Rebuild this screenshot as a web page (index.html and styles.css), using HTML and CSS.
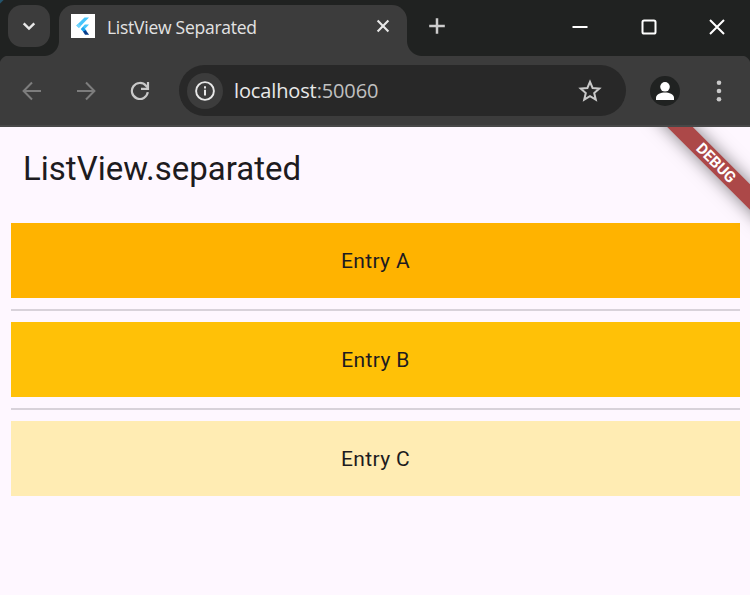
FILE: index.html
```html
<!DOCTYPE html>
<html lang="en">
<head>
<meta charset="utf-8">
<title>ListView Separated</title>
<link rel="stylesheet" href="styles.css">
</head>
<body>
<div class="window">
  <header class="tabstrip">
    <div class="tab-search"><svg width="42" height="42" viewBox="0 0 42 42"><path d="M15.700 18.300l5.300 5.300 5.300-5.300" fill="none" stroke="#e8e8e8" stroke-width="2.400"/></svg></div>
    <div class="tab">
      <svg class="favicon" width="24" height="24" viewBox="0 0 24 24"><rect width="24" height="24" fill="#fff"/><path d="M13.500 3.500H18L8 13.800l-2.600-2.300z" fill="#47c5fb"/><path d="M5.200 11.600L7.800 14l2-2-2.300-2.500z" fill="#71d4fc"/><path d="M13.800 10.500H18l-4.200 4.500H9.800z" fill="#47c5fb"/><path d="M9.800 15.300l2.300-2.300 3.400 3.600-2.500 1.800z" fill="#20a5ed"/><path d="M12 17.600l2.800-1.400 3.300 4.500H14z" fill="#083e8c"/></svg>
      <span class="tab-title">ListView Separated</span>
      <svg class="tab-close" width="14" height="14" viewBox="0 0 14 14"><path d="M1.600 1.600l10.800 10.800M12.400 1.600L1.600 12.400" stroke="#e8e8e8" stroke-width="2.100"/></svg>
    </div>
    <svg class="new-tab" width="16" height="16" viewBox="0 0 16 16"><path d="M8 .2v15.600M.2 8h15.600" stroke="#ccc" stroke-width="2.500"/></svg>
    <div class="controls">
      <svg width="16" height="16" viewBox="0 0 16 16"><path d="M.5 8h15" stroke="#fff" stroke-width="2"/></svg>
      <svg width="16" height="16" viewBox="0 0 16 16"><rect x="1.500" y="1.500" width="13" height="13" rx="1.600" fill="none" stroke="#fff" stroke-width="2"/></svg>
      <svg width="16" height="16" viewBox="0 0 16 16"><path d="M1 1l14 14M15 1L1 15" stroke="#fff" stroke-width="2"/></svg>
    </div>
  </header>
  <nav class="toolbar">
    <svg class="nav-icon" width="20" height="20" viewBox="0 0 20 20"><path d="M19 10H2M10 1.500L1.600 10l8.400 8.500" fill="none" stroke="#7d7d7d" stroke-width="2"/></svg>
    <svg class="nav-icon" width="20" height="20" viewBox="0 0 20 20"><path d="M1 10h17M10 1.500l8.400 8.500-8.400 8.500" fill="none" stroke="#7d7d7d" stroke-width="2"/></svg>
    <svg class="nav-icon reload" width="20" height="20" viewBox="0 0 20 20"><path d="M17.800 11.200A8 8 0 1 1 16 4.800L17.300 6.400" fill="none" stroke="#c9c9c9" stroke-width="2.200"/><path d="M18 1v6.800h-7" fill="none" stroke="#c9c9c9" stroke-width="2.200"/></svg>
    <div class="omnibox">
      <div class="site-info"><svg width="20" height="20" viewBox="0 0 20 20"><circle cx="10" cy="10" r="8.900" fill="none" stroke="#e8e8e8" stroke-width="1.900"/><path d="M10 8.800v5.700M10 5.300v2.100" stroke="#e8e8e8" stroke-width="2"/></svg></div>
      <span class="url">localhost<span class="port">:50060</span></span>
      <svg class="star" width="24" height="24" viewBox="0 0 24 24"><path d="M12 2.800l2.600 6.200 6.700.6-5.100 4.400 1.600 6.700-5.800-3.500-5.800 3.500L7.800 14 2.700 9.600l6.700-.6z" fill="none" stroke="#c9c9c9" stroke-width="2"/></svg>
    </div>
    <svg class="avatar" width="30" height="30" viewBox="0 0 30 30"><circle cx="15" cy="15" r="15" fill="#202221"/><circle cx="15" cy="10.800" r="4.800" fill="#fff"/><path d="M6 24v-2.200c0-3.600 5-5.300 9-5.300s9 1.700 9 5.300V24z" fill="#fff"/></svg>
    <svg class="menu" width="6" height="22" viewBox="0 0 6 22"><g fill="#c9c9c9"><circle cx="3" cy="2.700" r="2.300"/><circle cx="3" cy="11" r="2.300"/><circle cx="3" cy="19.300" r="2.300"/></g></svg>
  </nav>
  <main class="app">
    <h1 class="app-title">ListView.separated</h1>
    <ul class="list">
      <li class="entry entry-a">Entry A</li>
      <li class="divider"></li>
      <li class="entry entry-b">Entry B</li>
      <li class="divider"></li>
      <li class="entry entry-c">Entry C</li>
    </ul>
    <div class="banner">DEBUG</div>
  </main>
</div>
</body>
</html>
```

FILE: styles.css
```css
* { box-sizing: border-box; }
body { margin: 0; background: #fef7ff; }
svg { display: block; flex: none; }
.window { width: 750px; height: 595px; display: flex; flex-direction: column; overflow: hidden; }

.tabstrip {
  height: 56px;
  flex: none;
  display: flex;
  align-items: flex-start;
  background: linear-gradient(135deg, #24546c 2px, transparent 3px), #202221;
}
.tab-search { margin: 5px 9px 0 8px; width: 42px; height: 42px; border-radius: 14px; background: #3c3c3c; }
.tab {
  position: relative;
  width: 348px;
  height: 51px;
  margin-top: 5px;
  padding: 0 17px 8px 12px;
  display: flex;
  align-items: center;
  background: #3c3c3c;
  border-radius: 15px 15px 0 0;
}
.tab::before, .tab::after { content: ""; position: absolute; bottom: 0; width: 15px; height: 15px; }
.tab::before { left: -15px; background: radial-gradient(circle at 0 0, transparent 14.5px, #3c3c3c 15.5px); }
.tab::after { right: -15px; background: radial-gradient(circle at 100% 0, transparent 14.5px, #3c3c3c 15.5px); }
.favicon { margin-top: -1px; }
.tab-close { margin-top: -2px; }
.tab-title { flex: 1; margin-left: 12px; font: 17.5px/24px "Open Sans", sans-serif; letter-spacing: -0.26px; color: #e3e3e3; white-space: nowrap; }
.new-tab { margin: 18px 0 0 22px; }
.controls { margin: 19px 25px 0 auto; display: flex; gap: 52.5px; }

.toolbar {
  position: relative;
  height: 71px;
  flex: none;
  display: flex;
  align-items: center;
  padding: 0 28px 0 22px;
  background: #3c3c3c;
  border-bottom: 2px solid #484848;
}
.toolbar::before, .toolbar::after { content: ""; position: absolute; top: 0; width: 9px; height: 9px; }
.toolbar::before { left: 0; background: radial-gradient(circle at 100% 100%, transparent 9px, #202221 10px); }
.toolbar::after { right: 0; background: radial-gradient(circle at 0 100%, transparent 9px, #202221 10px); }
.nav-icon { margin-right: 34px; }
.nav-icon.reload { margin-right: 29px; }
.omnibox { width: 447px; height: 51px; border-radius: 26px; background: #282828; display: flex; align-items: center; padding: 0 24px 0 7.5px; }
.site-info { width: 36px; height: 36px; border-radius: 50%; background: #3c3c3c; display: flex; align-items: center; justify-content: center; }
.url { flex: 1; margin-left: 11.5px; font: 20px/28px "Open Sans", sans-serif; letter-spacing: -0.13px; color: #e8e8e8; }
.port { color: #c0c0c0; }
.avatar { margin-left: 24px; }
.menu { margin-left: auto; }

.app { position: relative; flex: 1; overflow: hidden; background: #fef7ff; font-family: Roboto, sans-serif; color: #1d1b20; }
.app-title { margin: 0; padding-left: 23px; height: 84px; font-size: 33px; font-weight: 400; line-height: 84px; }
.list { list-style: none; margin: 12px 10px 0 11px; padding: 0; }
.entry { height: 75px; display: flex; align-items: center; justify-content: center; font-size: 21px; letter-spacing: 0.375px; }
.entry-a { background: #ffb300; }
.entry-b { background: #ffc107; }
.entry-c { background: #ffecb3; }
.divider { height: 2px; margin: 11px 0; background: #d8d2da; }
.banner {
  position: absolute;
  left: 636px;
  top: 27px;
  width: 160px;
  height: 18px;
  transform: rotate(45deg);
  background: #ac4848;
  box-shadow: 0 0 17px rgba(0, 0, 0, 0.5);
  color: #fff;
  font-size: 15.3px;
  font-weight: 700;
  line-height: 18px;
  text-align: center;
}
```
